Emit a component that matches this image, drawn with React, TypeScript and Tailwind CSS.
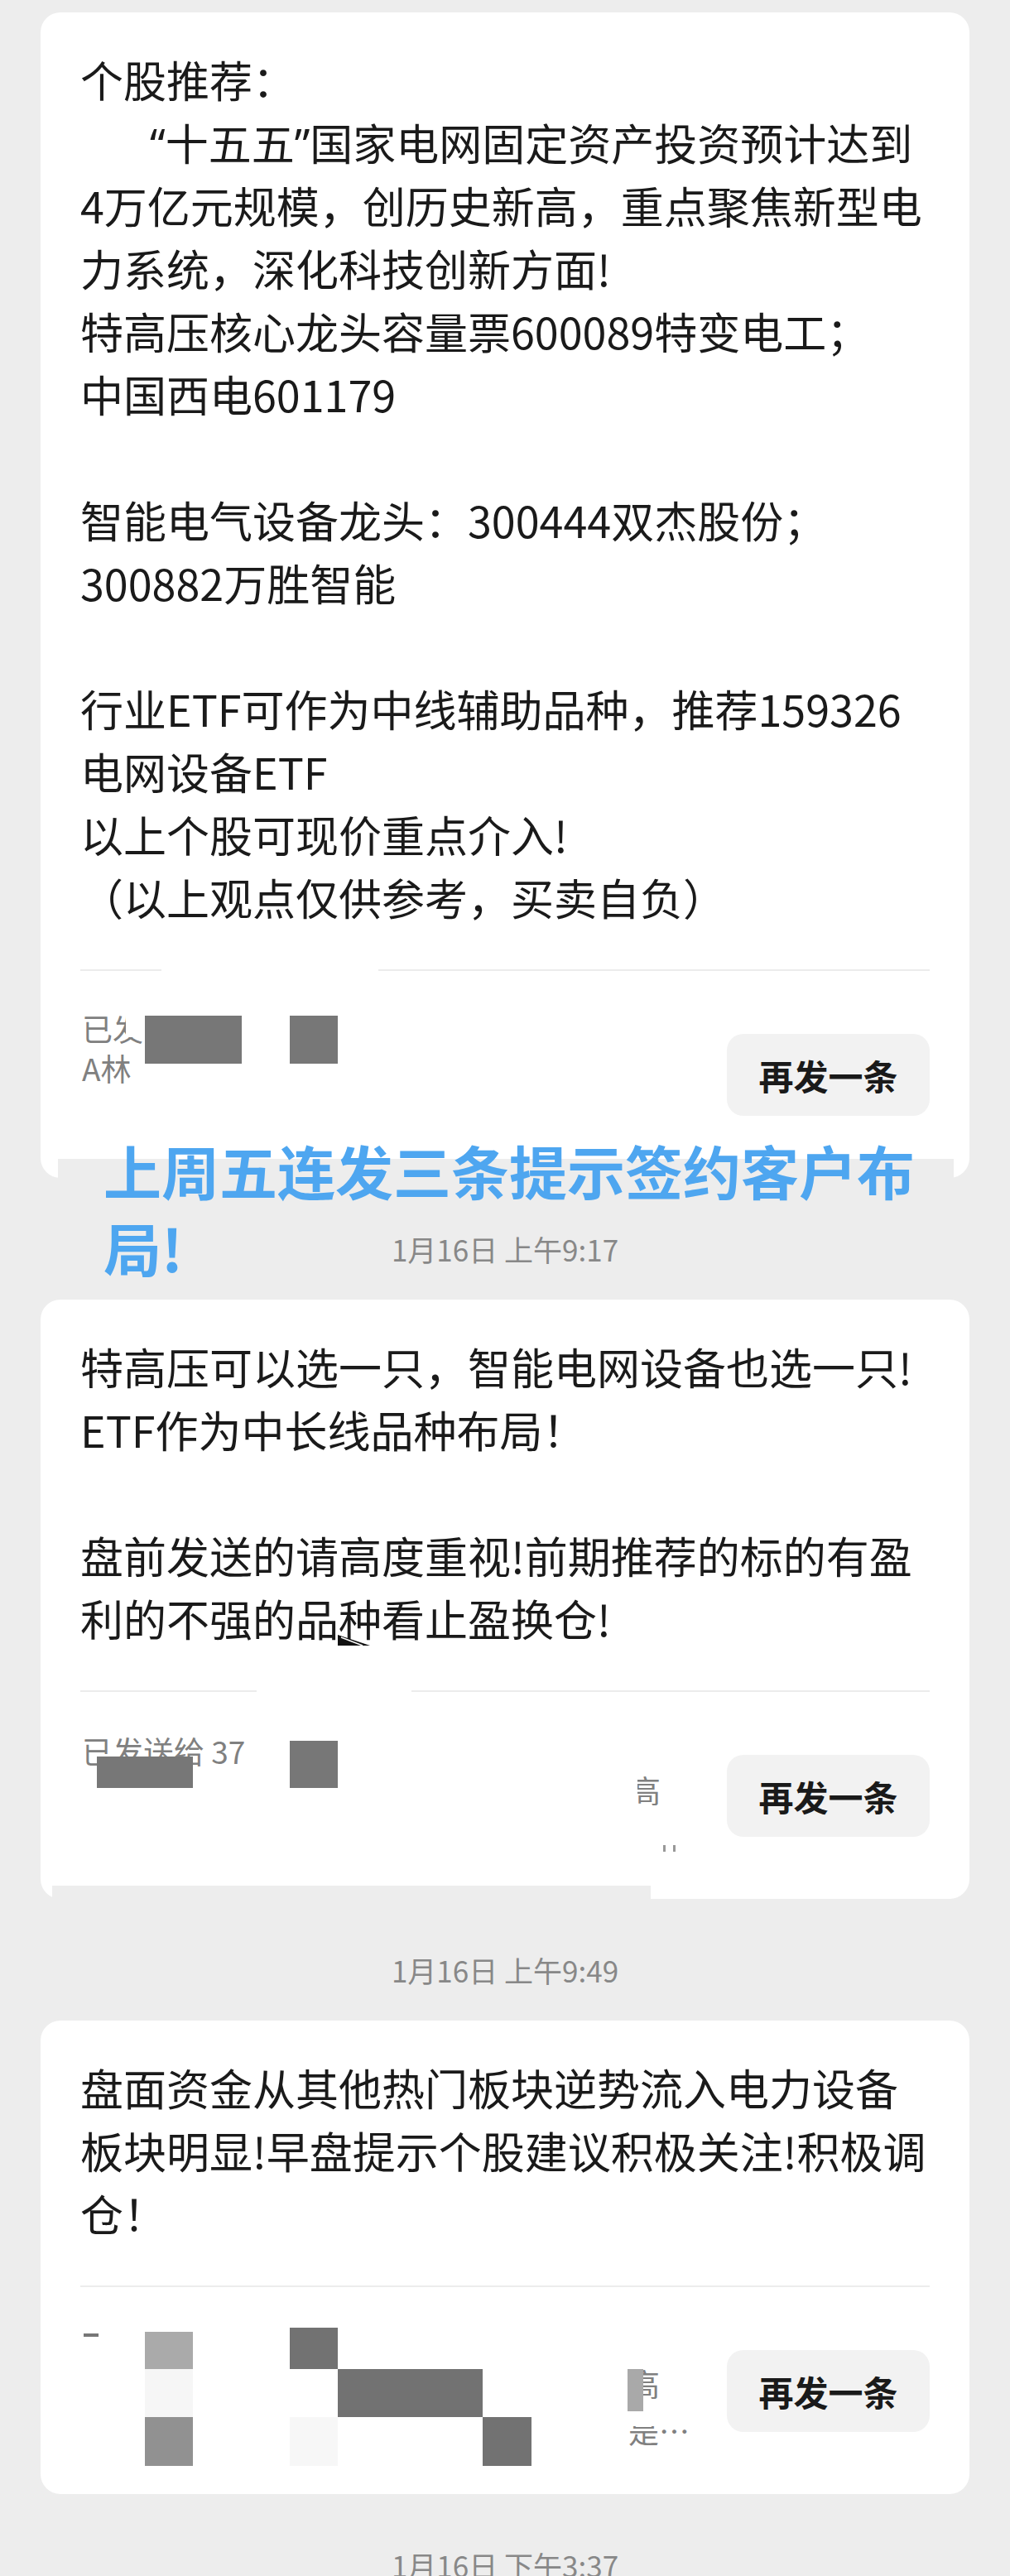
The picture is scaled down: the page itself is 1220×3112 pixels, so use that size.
import type { ReactNode } from 'react';

const q = (s: string) => <span className="font-['Noto_Sans',sans-serif]">{s}</span>;

type Patch = { left: number; width: number };

function Card({
  lines,
  gap,
  footer,
  extra,
}: {
  lines: ReactNode[];
  gap?: Patch;
  footer?: ReactNode;
  extra?: ReactNode;
}) {
  return (
    <div className="relative mx-[49px] w-[1122px] rounded-[24px] bg-white px-[48px] pt-[43px]">
      {lines.map((line, i) => (
        <div key={i} className="h-[76px] whitespace-nowrap text-[52px] leading-[76px] text-[#1a1a1a]">
          {line || '\u00a0'}
        </div>
      ))}
      {/* divider */}
      <div className="relative mt-[49px] h-[2px] bg-[#ececec]">
        {gap && (
          <div className="absolute top-0 h-[2px] bg-white" style={{ left: gap.left, width: gap.width }} />
        )}
      </div>
      {/* footer */}
      <div className="relative flex h-[250px] items-center justify-end">
        {footer}
        <button className="flex h-[99px] w-[245px] items-center justify-center rounded-[20px] bg-[#f2f2f2] text-[42px] font-bold text-[#1a1a1a]">
          再发一条
        </button>
      </div>
      {extra}
    </div>
  );
}

function Stamp({ children }: { children: ReactNode }) {
  return (
    <div className="pt-[66px] pb-[41px] text-center text-[35px] leading-[40px] text-[#888]">{children}</div>
  );
}

export default function App() {
  return (
    <div className="relative min-h-[3112px] overflow-hidden bg-[#ededed] pt-[15px] font-['Noto_Sans_CJK_SC',sans-serif]">
      <Card
        lines={[
          '个股推荐：',
          <span className="pl-[84px]">
            {q('“')}十五五{q('”')}国家电网固定资产投资预计达到
          </span>,
          '4万亿元规模，创历史新高，重点聚焦新型电',
          '力系统，深化科技创新方面!',
          '特高压核心龙头容量票600089特变电工；',
          '中国西电601179',
          '',
          '智能电气设备龙头：300444双杰股份；',
          '300882万胜智能',
          '',
          '行业ETF可作为中线辅助品种，推荐159326',
          '电网设备ETF',
          '以上个股可现价重点介入!',
          '（以上观点仅供参考，买卖自负）',
        ]}
        gap={{ left: 98, width: 262 }}
        footer={
          <>
            <div className="absolute left-[2px] top-[49px] whitespace-nowrap text-[37px] leading-[40px] text-[#808080]">
              已发
            </div>
            <div className="absolute left-[2px] top-[97px] whitespace-nowrap text-[37px] leading-[40px] text-[#808080]">
              A林
            </div>
            <div className="absolute left-[55px] top-[44px] h-[36px] w-[23px] bg-white" />
            <div className="absolute left-[78px] top-[54px] h-[58px] w-[117px] bg-[#777]" />
            <div className="absolute left-[253px] top-[54px] h-[58px] w-[58px] bg-[#777]" />
          </>
        }
        extra={<div className="absolute bottom-0 left-[21px] right-[19px] h-[23px] bg-[#ededed]" />}
      />

      <Stamp>1月16日 上午9:17</Stamp>

      <Card
        lines={[
          '特高压可以选一只，智能电网设备也选一只!',
          'ETF作为中长线品种布局！',
          '',
          '盘前发送的请高度重视!前期推荐的标的有盈',
          '利的不强的品种看止盈换仓!',
        ]}
        gap={{ left: 213, width: 187 }}
        footer={
          <>
            <div className="absolute left-[2px] top-[51px] whitespace-nowrap text-[37px] leading-[40px] text-[#808080]">
              已发送给 37
            </div>
            <div className="absolute left-[20px] top-[78px] h-[38px] w-[116px] bg-[#777]" />
            <div className="absolute left-[253px] top-[59px] h-[57px] w-[58px] bg-[#777]" />
            <div className="absolute left-[664px] top-[98px] whitespace-nowrap text-[37px] leading-[40px] text-[#808080]">
              高
            </div>
            <div className="absolute left-[655px] top-[95px] h-[45px] w-[18px] bg-white" />
            <div className="absolute left-[704px] top-[185px] h-[8px] w-[3px] bg-[#999]" />
            <div className="absolute left-[716px] top-[185px] h-[8px] w-[3px] bg-[#999]" />
          </>
        }
        extra={
          <>
            <svg className="absolute left-[359px] top-[405px]" width="39" height="13" viewBox="0 0 39 13">
              <polygon points="0,0 0,13 39,13" fill="#111" />
              <line x1="4" y1="3" x2="30" y2="13" stroke="#fff" strokeWidth="1.5" />
            </svg>
            <div className="absolute bottom-0 left-[14px] h-[16px] w-[723px] bg-[#ededed]" />
          </>
        }
      />

      <Stamp>1月16日 上午9:49</Stamp>

      <Card
        lines={[
          '盘面资金从其他热门板块逆势流入电力设备',
          '板块明显!早盘提示个股建议积极关注!积极调',
          '仓！',
        ]}
        footer={
          <>
            <div className="absolute left-[4px] top-[56px] h-[4px] w-[18px] bg-[#777]" />
            <div className="absolute left-[78px] top-[54px] h-[45px] w-[58px] bg-[#aaa]" />
            <div className="absolute left-[78px] top-[99px] h-[58px] w-[58px] bg-[#f6f6f6]" />
            <div className="absolute left-[78px] top-[157px] h-[59px] w-[58px] bg-[#919191]" />
            <div className="absolute left-[253px] top-[49px] h-[50px] w-[58px] bg-[#727272]" />
            <div className="absolute left-[253px] top-[157px] h-[59px] w-[58px] bg-[#f7f7f7]" />
            <div className="absolute left-[311px] top-[99px] h-[58px] w-[175px] bg-[#727272]" />
            <div className="absolute left-[486px] top-[157px] h-[59px] w-[59px] bg-[#727272]" />
            <div className="absolute left-[663px] top-[96px] whitespace-nowrap text-[37px] leading-[40px] text-[#808080]">
              高
            </div>
            <div className="absolute left-[661px] top-[99px] h-[58px] w-[19px] bg-[#a9a9a9]" />
            <div className="absolute left-[662px] top-[153px] whitespace-nowrap text-[37px] leading-[40px] text-[#808080]">
              是…
            </div>
            <div className="absolute left-[655px] top-[150px] h-[18px] w-[40px] bg-white" />
          </>
        }
      />

      <Stamp>1月16日 下午3:37</Stamp>

      {/* blue annotation laid over the screenshot */}
      <div className="absolute left-[125px] top-[1367px] whitespace-nowrap text-[70px] font-bold leading-[93px] text-[#4ea6f0]">
        上周五连发三条提示签约客户布
        <br />
        局!
      </div>
    </div>
  );
}
